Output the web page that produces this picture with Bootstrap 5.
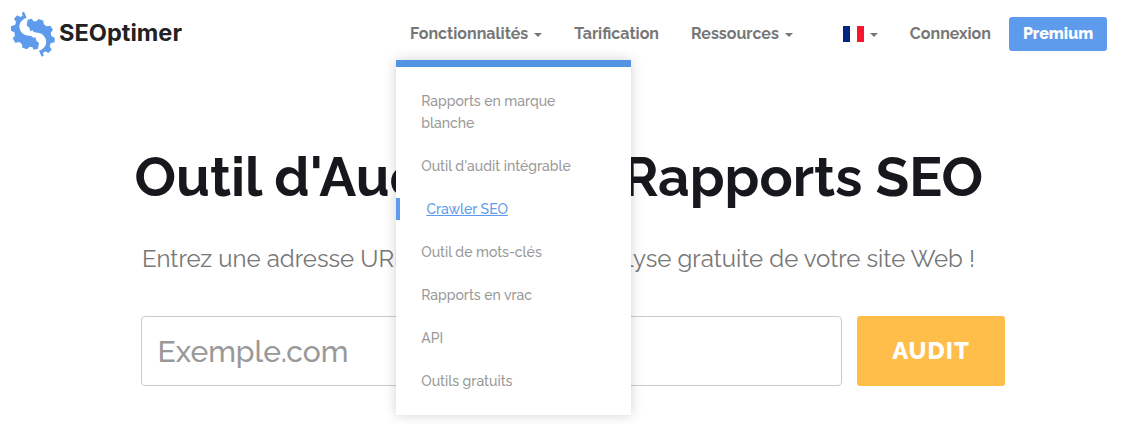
<!DOCTYPE html>
<html lang="fr">
<head>
<meta charset="utf-8">
<meta name="viewport" content="width=device-width, initial-scale=1">
<title>SEOptimer</title>
<link href="https://cdn.jsdelivr.net/npm/bootstrap@5.3.0/dist/css/bootstrap.min.css" rel="stylesheet">
<style>
body{font-family:Raleway,Lato,"Open Sans",sans-serif;height:424px;overflow:hidden;background:#fff}
.topbar{height:67px;padding:0 19px 0 10px;font-size:16px;font-weight:700;color:#777}
.topbar .nav-link{color:#777;padding:0;line-height:24px;white-space:nowrap}
.topbar .dropdown-toggle::after{border-top:4px solid;border-right:4px solid transparent;border-left:4px solid transparent;margin-left:6px;vertical-align:2px}
.brand-logo{width:174px;height:50px;margin-top:10px}
.main-links{margin-left:226px}
.btn-premium{width:98px;height:34px;padding:0;background:#5e9bec;color:#fff;font-weight:800;border-radius:3px;border:0;font-size:16px}
.feature-menu{width:235px;left:-14px;top:38px;border:0;border-top:7px solid #5593e3;border-radius:0;padding:23px 0;box-shadow:0 0 12px rgba(0,0,0,.175);display:block}
.feature-menu .dropdown-item{font-size:14px;line-height:22px;color:#999;white-space:normal;padding:0 50px 0 25.2px;margin-bottom:21px;font-weight:500}
.feature-menu li:last-child .dropdown-item{margin-bottom:0}
.feature-menu .current{border-left:4px solid #5e9bec;color:#5e9bec;padding-left:26.4px;text-decoration:underline}
.hero-title{font-size:55px;font-weight:700;line-height:62px;color:#17181e;margin:79px 0 0 134.5px;white-space:nowrap}
.hero-text{font-size:24px;font-weight:400;line-height:36px;color:#777;margin:33px 0 0 142px;white-space:nowrap}
.audit-form{margin:39px 0 0 141px;gap:15px}
.audit-form .form-control{width:701px;height:70px;font-size:30px;font-weight:500;border:1px solid #ccc;border-radius:4px;padding:0 15.6px;color:#555}
.audit-form .form-control::placeholder{color:#999;opacity:1}
.btn-audit{width:148px;height:70px;background:#ffbd4a;color:#fff;font-size:24px;font-weight:800;letter-spacing:1px;border:0;border-radius:3px}
.flag-fr{width:21px;height:16px;display:inline-block;vertical-align:-3px}
</style>
</head>
<body>
<header class="topbar d-flex align-items-start">
  <a href="#" class="d-block" aria-label="SEOptimer"><svg class="brand-logo d-block" viewBox="10 10 174 50">
    <defs><path id="half-gear" d="M57 20L65 38C49 43 41 56 44 70C47 83 57 91 69 92C77 92 82 93 85 99L91 96L94 107L102 114L99 131L86 134L82 126L73 126L66 133L52 128L51 118L43 111L31 113L23 100L30 92L28 82L18 77L18 63L30 60L33 51L27 41L37 31L46 36L53 32L51 23Z"/></defs>
    <g transform="translate(5 5) scale(.33333)" fill="#5e9bec">
      <use href="#half-gear"/>
      <use href="#half-gear" transform="rotate(180 83.5 87.5)"/>
    </g>
    <text x="59" y="41" font-family="Inter" font-weight="700" font-size="23" fill="#222" textLength="123" lengthAdjust="spacingAndGlyphs">SEOptimer</text>
  </svg></a>
  <nav class="main-links d-flex" style="padding-top:22px">
    <div class="position-relative"><a class="nav-link dropdown-toggle" href="#">Fonctionnalités</a>
      <ul class="dropdown-menu feature-menu">
        <li><a class="dropdown-item" href="#">Rapports en marque blanche</a></li>
        <li><a class="dropdown-item" href="#">Outil d'audit intégrable</a></li>
        <li><a class="dropdown-item current" href="#">Crawler SEO</a></li>
        <li><a class="dropdown-item" href="#">Outil de mots-clés</a></li>
        <li><a class="dropdown-item" href="#">Rapports en vrac</a></li>
        <li><a class="dropdown-item" href="#">API</a></li>
        <li><a class="dropdown-item" href="#">Outils gratuits</a></li>
      </ul></div>
    <a class="nav-link" style="margin-left:32px" href="#">Tarification</a>
    <a class="nav-link dropdown-toggle" style="margin-left:32px" href="#">Ressources</a>
  </nav>
  <nav class="d-flex ms-auto" style="padding-top:22px">
    <a class="nav-link dropdown-toggle" href="#" aria-label="Français"><svg class="flag-fr" viewBox="0 0 21 16"><path fill="#00267f" d="M0 0h7v16H0z"/><path fill="#fff" d="M7 0h7v16H7z"/><path fill="#f8152f" d="M14 0h7v16h-7z"/></svg></a>
    <a class="nav-link" style="margin-left:32px;margin-right:18px" href="#">Connexion</a>
  </nav>
  <a class="btn btn-premium d-flex align-items-center justify-content-center" style="margin-top:17px" href="#">Premium</a>
</header>
<main>
  <h1 class="hero-title">Outil d'Audit et de Rapports SEO</h1>
  <p class="hero-text">Entrez une adresse URL et obtenez une analyse gratuite de votre site Web !</p>
  <form class="audit-form d-flex">
    <input class="form-control" type="text" placeholder="Exemple.com">
    <button class="btn btn-audit" type="button">AUDIT</button>
  </form>
</main>
<script src="https://cdn.jsdelivr.net/npm/bootstrap@5.3.0/dist/js/bootstrap.bundle.min.js"></script>
</body>
</html>
